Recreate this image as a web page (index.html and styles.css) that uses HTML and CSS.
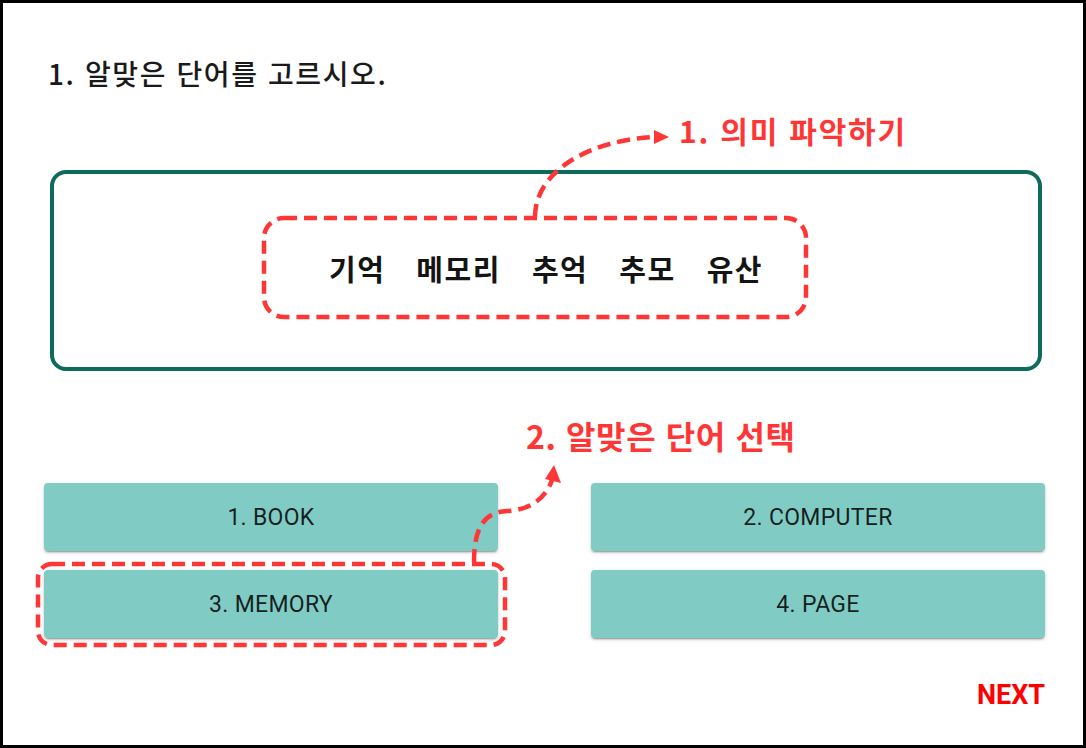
FILE: index.html
```html
<!DOCTYPE html>
<html lang="ko">
<head>
<meta charset="utf-8">
<link rel="stylesheet" href="styles.css">
</head>
<body>
<div class="frame">
  <h1 class="title">1. 알맞은 단어를 고르시오.</h1>
  <div class="word-box">
    <span>기억</span><span>메모리</span><span>추억</span><span>추모</span><span>유산</span>
  </div>
  <div class="choices">
    <button class="choice">1. Book</button>
    <button class="choice">2. Computer</button>
    <button class="choice">3. Memory</button>
    <button class="choice">4. Page</button>
  </div>
  <div class="footer"><span class="next">NEXT</span></div>

  <svg class="annot" width="1086" height="748" viewBox="0 0 1086 748">
    <g fill="none" stroke="#ff3636" stroke-width="4.5" stroke-dasharray="13 7">
      <rect x="264" y="218" width="542" height="99" rx="20"/>
      <path d="M535 217 C535 172 588 140 655 137"/>
      <rect x="38" y="564" width="467" height="81" rx="14"/>
      <path d="M474 562 C474 528 484 512 507 511 C530 510 546 498 552 480"/>
    </g>
    <g fill="#ff3636">
      <polygon points="654,130 669,137 654,144"/>
      <polygon points="554,465 545,479 561,483"/>
    </g>
  </svg>
  <div class="label label-1">1. 의미 파악하기</div>
  <div class="label label-2">2. 알맞은 단어 선택</div>
</div>
</body>
</html>
```

FILE: styles.css
```css
html, body {
  margin: 0;
  padding: 0;
  background: #fff;
}

.frame {
  position: relative;
  width: 1086px;
  height: 748px;
  box-sizing: border-box;
  border: 3px solid #000;
  font-family: "Noto Sans CJK KR", "Noto Sans", sans-serif;
  overflow: hidden;
}

.title {
  margin: 50px 0 0 45px;
  font-size: 28px;
  line-height: 40px;
  font-weight: 500;
  letter-spacing: 1.6px;
  color: #1a1a1a;
}

.word-box {
  box-sizing: border-box;
  margin: 77px 41px 0 47px;
  height: 201px;
  padding-bottom: 6px;
  border: 4px solid #0e6a5b;
  border-radius: 16px;
  display: flex;
  align-items: center;
  justify-content: center;
  gap: 31px;
  font-size: 29px;
  font-weight: 700;
  letter-spacing: 1.5px;
  color: #141414;
}

.choices {
  margin: 112px 38px 0 41px;
  display: grid;
  grid-template-columns: 454px 454px;
  column-gap: 93px;
  row-gap: 19px;
}

.choice {
  height: 68px;
  border: none;
  border-radius: 4px;
  background: #80cbc4;
  box-shadow: 0 3px 1px -2px rgba(0,0,0,.2), 0 2px 2px 0 rgba(0,0,0,.14), 0 1px 5px 0 rgba(0,0,0,.12);
  font-family: Roboto, "Noto Sans", sans-serif;
  font-size: 23px;
  font-weight: 400;
  letter-spacing: 0.3px;
  text-transform: uppercase;
  color: rgba(0,0,0,.85);
  padding: 0;
}

.footer {
  display: flex;
  justify-content: flex-end;
  margin: 42px 38px 0 0;
}

.next {
  font-family: Roboto, "Liberation Sans", sans-serif;
  font-weight: 700;
  font-size: 27px;
  line-height: 30px;
  color: #ff0000;
}

.annot {
  position: absolute;
  left: -3px;
  top: -3px;
}

.label {
  position: absolute;
  color: #ff3636;
  font-weight: 700;
  line-height: 1;
  white-space: nowrap;
}

.label-1 {
  left: 676px;
  top: 112px;
  font-size: 30px;
  letter-spacing: 1.8px;
}

.label-2 {
  left: 523px;
  top: 416px;
  font-size: 32px;
  letter-spacing: 0.6px;
}
```
